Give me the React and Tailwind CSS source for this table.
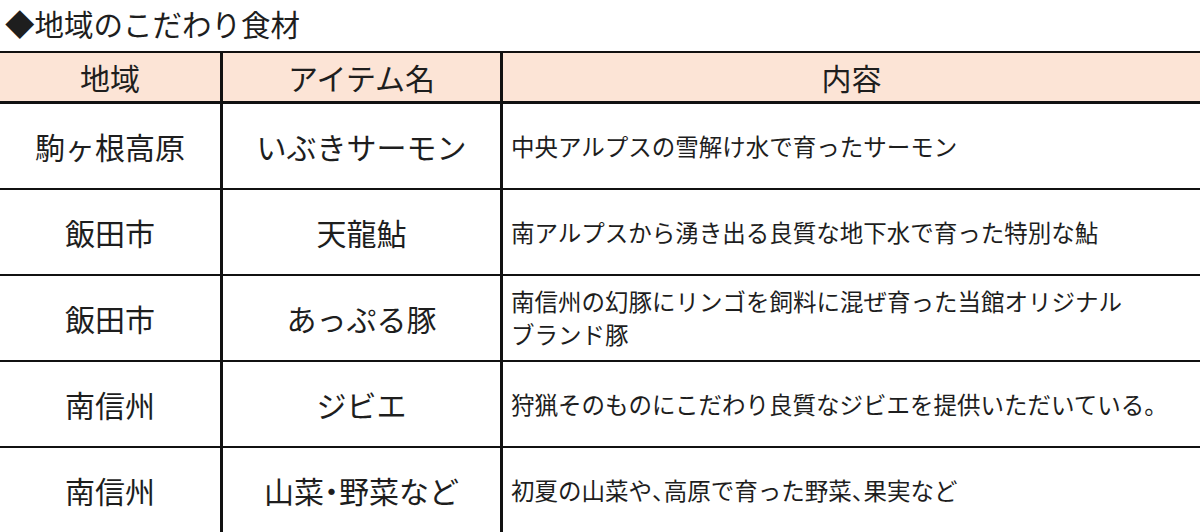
import React from 'react';

const rows = [
  { area: '駒ヶ根高原', item: 'いぶきサーモン', desc: ['中央アルプスの雪解け水で育ったサーモン'] },
  { area: '飯田市', item: '天龍鮎', desc: ['南アルプスから湧き出る良質な地下水で育った特別な鮎'] },
  { area: '飯田市', item: 'あっぷる豚', desc: ['南信州の幻豚にリンゴを飼料に混ぜ育った当館オリジナル', 'ブランド豚'] },
  { area: '南信州', item: 'ジビエ', desc: ['狩猟そのものにこだわり良質なジビエを提供いただいている。'] },
  { area: '南信州', item: '山菜・野菜など', desc: ['初夏の山菜や、高原で育った野菜、果実など'] },
];

const font = { fontFamily: '"Noto Sans CJK JP", "Noto Sans", sans-serif' };

// narrow punctuation like the original's proportional font
const Narrow = ({ text }) =>
  text.split(/([・、])/).map((part, i) =>
    part === '・' || part === '、' ? (
      <span key={i} className="[font-feature-settings:'halt']">{part}</span>
    ) : (
      part
    )
  );

const App = () => {
  return (
    <div className="w-[1200px] h-[532px] bg-white text-[#1e1e1e] overflow-hidden" style={font}>
      <div className="h-[51px] pl-[5px] flex items-center text-[29.5px] leading-none pb-[3px]">
        ◆地域のこだわり食材
      </div>

      <div className="border-t-2 border-[#111]">
        {/* header */}
        <div className="grid grid-cols-[223px_280px_1fr] h-[51px] bg-[#fce4d6] border-b-[3px] border-[#111]">
          <div className="flex items-center justify-center text-[30px] border-r-[3px] border-[#111]">地域</div>
          <div className="flex items-center justify-center text-[30px] border-r-[3px] border-[#111]">アイテム名</div>
          <div className="flex items-center justify-center text-[30px]">内容</div>
        </div>

        {rows.map((row, i) => (
          <div
            key={i}
            className="grid grid-cols-[223px_280px_1fr] h-[86px] border-b-2 border-[#111]"
          >
            <div className="flex items-center justify-center text-[30px] border-r-[3px] border-[#111]">
              {row.area}
            </div>
            <div className="flex items-center justify-center text-[30px] border-r-[3px] border-[#111]">
              <Narrow text={row.item} />
            </div>
            <div className="flex flex-col justify-center pl-[8px] text-[23.5px] leading-[33px]">
              {row.desc.map((line, j) => (
                <div key={j}>
                  <Narrow text={line} />
                </div>
              ))}
            </div>
          </div>
        ))}
      </div>
    </div>
  );
};

export default App;
